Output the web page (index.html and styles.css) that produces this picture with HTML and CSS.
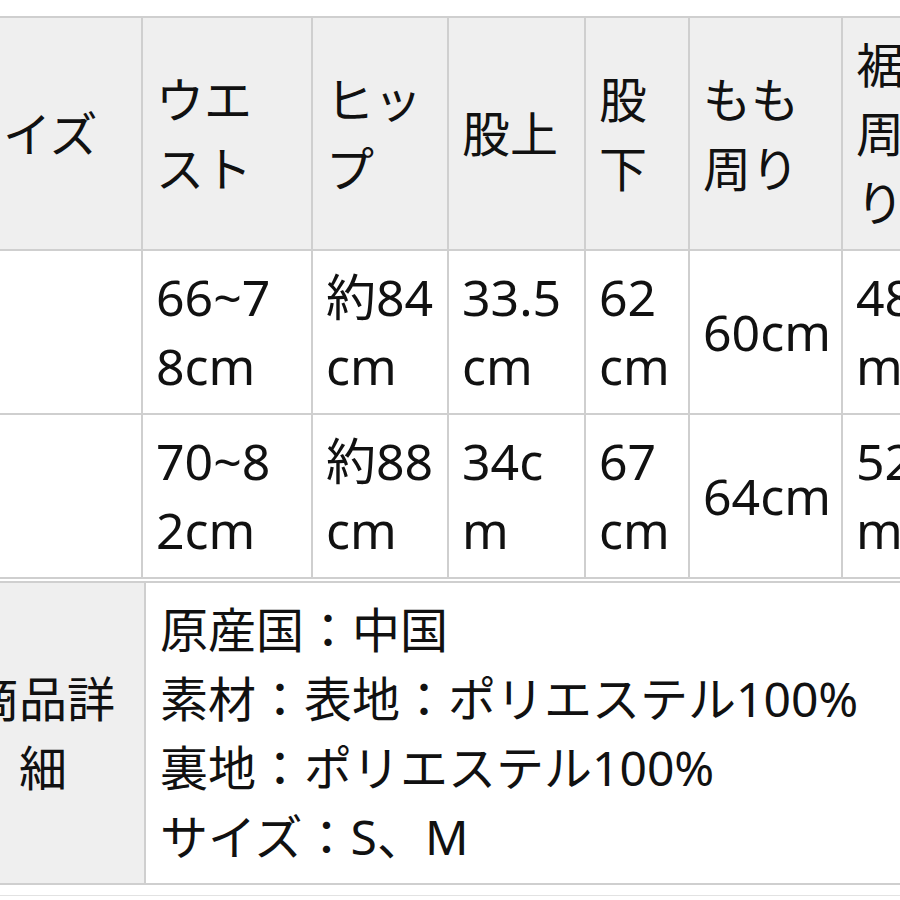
FILE: index.html
```html
<!DOCTYPE html>
<html lang="ja">
<head>
<meta charset="utf-8">
<title>サイズ表</title>
<link rel="stylesheet" href="styles.css">
</head>
<body>
<div class="frame">
  <table class="sizes">
    <colgroup>
      <col class="c0"><col class="c1"><col class="c2"><col class="c3"><col class="c4"><col class="c5"><col class="c6">
    </colgroup>
    <tr>
      <th>サイズ</th><th>ウエスト</th><th>ヒップ</th><th>股上</th><th>股下</th><th>もも周り</th><th>裾周り</th>
    </tr>
    <tr>
      <td>S</td><td>66~78cm</td><td>約84cm</td><td>33.5cm</td><td>62cm</td><td>60cm</td><td>48cm</td>
    </tr>
    <tr>
      <td>M</td><td>70~82cm</td><td>約88cm</td><td>34cm</td><td>67cm</td><td>64cm</td><td>52cm</td>
    </tr>
  </table>
  <table class="details">
    <colgroup><col class="d0"><col class="d1"></colgroup>
    <tr>
      <th>商品詳細</th>
      <td>原産国：中国<br>素材：表地：ポリエステル100%<br>裏地：ポリエステル100%<br>サイズ：S、M</td>
    </tr>
  </table>
  <div class="next"></div>
</div>
</body>
</html>
```
FILE: styles.css
```css
html, body {
  margin: 0;
  padding: 0;
  background: #ffffff;
}
.frame {
  width: 900px;
  height: 900px;
  overflow: hidden;
  font-family: "Noto Sans", "Noto Sans CJK JP", sans-serif;
  font-size: 48px;
  line-height: 69px;
  color: #111111;
}
table {
  border-collapse: collapse;
  table-layout: fixed;
  margin-left: -60px;
}
th, td {
  border: 2px solid #cfcfcf;
  padding: 12px 13px;
  text-align: left;
  vertical-align: middle;
  font-weight: normal;
  word-break: break-all;
}
th {
  background: #efefef;
}
td {
  background: #ffffff;
}

/* size table */
.sizes {
  width: 1019px;
  margin-top: 16px;
  border: 2px solid #cfcfcf;
}
.sizes td {
  font-size: 50px;
}
.c0 { width: 201px; }
.c1 { width: 170px; }
.c2 { width: 136px; }
.c3 { width: 137px; }
.c4 { width: 104px; }
.c5 { width: 153px; }
.c6 { width: 118px; }
.sizes th:nth-child(2), .sizes td:nth-child(2) { padding-right: 28px; }
.sizes th:nth-child(3), .sizes td:nth-child(3) { padding-right: 10px; }
.sizes th:nth-child(5), .sizes td:nth-child(5) { padding-right: 18px; }
.sizes th:nth-child(6), .sizes td:nth-child(6) { padding-right: 8px; }

/* details table */
.details {
  width: 1019px;
  margin-top: 2px;
  border: 2px solid #cfcfcf;
}
.details th {
  text-align: center;
}
.details td {
  padding-left: 14px;
}
.d0 { width: 204px; }
.d1 { width: 815px; }

.next {
  margin-top: 10px;
  margin-left: -60px;
  border-top: 1px solid #e2e2e2;
  height: 20px;
}
```
